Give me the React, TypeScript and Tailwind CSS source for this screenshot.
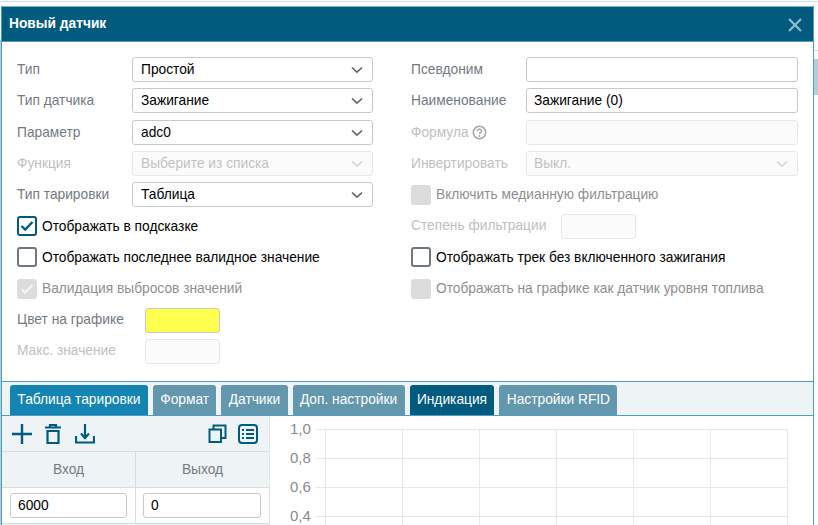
import React from "react";

const F = "font-['Liberation_Sans',Arial,sans-serif]";

function Chevron({ disabled }: { disabled?: boolean }) {
  return (
    <svg width="12" height="8" viewBox="0 0 12 8" className="absolute right-[9px] top-[8px]">
      <path d="M1 1.5 L6 6.2 L11 1.5" fill="none" stroke={disabled ? "#d4d6d9" : "#5c6670"} strokeWidth="1.6" />
    </svg>
  );
}

function Select({ value, disabled }: { value: string; disabled?: boolean }) {
  return (
    <div
      className={
        "relative h-[25px] w-[241px] rounded-[3px] border pl-[8px] text-[13.75px] leading-[23px] " +
        (disabled ? "border-[#e8e8e8] bg-[#fbfbfb] text-[#c2c2c2]" : "border-[#c8c8c8] bg-white text-black")
      }
    >
      {value}
      <Chevron disabled={disabled} />
    </div>
  );
}

function Input({ value, disabled, className = "w-[272px]" }: { value?: string; disabled?: boolean; className?: string }) {
  return (
    <div
      className={
        "h-[25px] rounded-[3px] border pl-[7px] text-[13.75px] leading-[23px] " +
        (disabled ? "border-[#e8e8e8] bg-[#fbfbfb] " : "border-[#c8c8c8] bg-white text-black ") +
        className
      }
    >
      {value}
    </div>
  );
}

function Label({ children, disabled, w, raised }: { children: React.ReactNode; disabled?: boolean; w: string; raised?: boolean }) {
  return (
    <div
      className={
        "shrink-0 text-[13.75px] " +
        (raised ? "leading-[23px] " : "leading-[25px] ") +
        w +
        " " +
        (disabled ? "text-[#c0c0c0]" : "text-[#727a82]")
      }
    >
      {children}
    </div>
  );
}

function Check({ state, label }: { state: "on" | "off" | "dis-on" | "dis"; label: string }) {
  const box =
    state === "on"
      ? "border-2 border-[#005b7f] bg-white"
      : state === "off"
        ? "border-2 border-[#6f7782] bg-white"
        : "bg-[#dcdcdc]";
  const text = state === "on" || state === "off" ? "text-black" : "text-[#8f8f8f]";
  return (
    <div className="flex h-[25px] items-center">
      <div className={"flex h-[20px] w-[20px] shrink-0 items-center justify-center rounded-[3px] " + box}>
        {state === "on" && (
          <svg width="14" height="12" viewBox="0 0 14 12">
            <path d="M1.5 6 L5.2 9.5 L12.5 2" fill="none" stroke="#005b7f" strokeWidth="2.4" />
          </svg>
        )}
        {state === "dis-on" && (
          <svg width="14" height="12" viewBox="0 0 14 12">
            <path d="M1.5 6 L5.2 9.5 L12.5 2" fill="none" stroke="#f4f4f4" strokeWidth="2.4" />
          </svg>
        )}
      </div>
      <span className={"ml-[5px] text-[13.75px] leading-[21px] " + text}>{label}</span>
    </div>
  );
}

function Tab({ children, kind }: { children: React.ReactNode; kind?: "first" | "active" }) {
  const bg = kind === "first" ? "bg-[#1485b3]" : kind === "active" ? "bg-[#005b7f]" : "bg-[#6297ad]";
  return <div className={"h-[30px] rounded-t-[3px] px-[7.35px] text-[13.75px] leading-[29px] text-white " + bg}>{children}</div>;
}

function Chart() {
  const xs = [0, 77, 154, 231, 308, 385, 462];
  return (
    <div className="relative min-w-0 flex-1 bg-white pl-[51px] pt-[13px]">
      {["1,0", "0,8", "0,6", "0,4"].map((t, i) => (
        <div key={t} className="absolute left-[20px] text-[15px] leading-[16px] text-[#8b8b8b]" style={{ top: 5 + i * 29 }}>
          {t}
        </div>
      ))}
      <svg width="500" height="100" className="block overflow-visible">
        {[0, 29, 58, 87].map((y) => (
          <line key={y} x1="-5" x2="467" y1={y + 0.5} y2={y + 0.5} stroke="#e8e8e8" />
        ))}
        {xs.map((x) => (
          <line key={x} x1={x + 4.5} x2={x + 4.5} y1="0" y2="100" stroke="#e8e8e8" />
        ))}
      </svg>
    </div>
  );
}

export default function App() {
  return (
    <div className={"relative h-[525px] w-[818px] overflow-hidden bg-[#fbfcfc] pl-px pt-[6px] " + F}>
      <div className="absolute left-0 right-0 top-px h-px bg-[#cfe2ea]" />
      <div className="absolute bottom-0 left-0 top-[40px] w-px bg-[#a9d0df]" />
      <div className="absolute right-0 top-[50px] h-px w-[4px] bg-[#dfe3e5]" />
      <div className="absolute right-0 top-[59px] h-[36px] w-[4px] bg-[#b5cdd8]" />
      <div className="relative h-[519px] w-[813px] overflow-hidden border-x border-[#4f9cc4] bg-white">
        <div className="flex h-[36px] items-center justify-between border-y border-[#4f9cc4] border-t-[#7fb3c8] bg-[#005b7f] pl-[7px] pr-[11px] pt-px">
          <span className="text-[13.75px] font-bold text-white">Новый датчик</span>
          <svg width="14" height="14" viewBox="0 0 14 14">
            <path d="M1 1 L13 13 M13 1 L1 13" stroke="#8fbdd0" strokeWidth="2.2" />
          </svg>
        </div>

        <div className="flex h-[339px] pt-[15px]">
          <div className="flex w-[394px] shrink-0 flex-col gap-[6.33px] pl-[15px]">
            <div className="flex"><Label w="w-[115px]">Тип</Label><Select value="Простой" /></div>
            <div className="flex"><Label w="w-[115px]">Тип датчика</Label><Select value="Зажигание" /></div>
            <div className="flex"><Label w="w-[115px]">Параметр</Label><Select value="adc0" /></div>
            <div className="flex"><Label w="w-[115px]" disabled>Функция</Label><Select value="Выберите из списка" disabled /></div>
            <div className="flex"><Label w="w-[115px]">Тип тарировки</Label><Select value="Таблица" /></div>
            <Check state="on" label="Отображать в подсказке" />
            <Check state="off" label="Отображать последнее валидное значение" />
            <Check state="dis-on" label="Валидация выбросов значений" />
            <div className="flex"><Label w="w-[128px]" raised>Цвет на графике</Label><div className="h-[25px] w-[75px] rounded-[3px] border border-[#c8c8c8] bg-[#ffff4d]" /></div>
            <div className="flex"><Label w="w-[128px]" raised disabled>Макс. значение</Label><Input disabled className="w-[75px]" /></div>
          </div>

          <div className="flex flex-col gap-[6.33px] pl-[15px]">
            <div className="flex"><Label w="w-[115px]">Псевдоним</Label><Input /></div>
            <div className="flex"><Label w="w-[115px]">Наименование</Label><Input value="Зажигание (0)" /></div>
            <div className="flex">
              <Label w="w-[115px]" disabled>
                <span className="flex h-[25px] items-center gap-[3px]">
                  Формула
                  <svg width="15" height="15" viewBox="0 0 15 15">
                    <circle cx="7.5" cy="7.5" r="6.2" fill="none" stroke="#a8a8a8" strokeWidth="1.6" />
                    <path d="M5.4 6 C5.4 3.6 9.6 3.6 9.6 5.9 C9.6 7.4 7.5 7.2 7.5 9" fill="none" stroke="#a8a8a8" strokeWidth="1.5" />
                    <circle cx="7.5" cy="11" r="0.9" fill="#a8a8a8" />
                  </svg>
                </span>
              </Label>
              <Input disabled />
            </div>
            <div className="flex">
              <Label w="w-[115px]" disabled>Инвертировать</Label>
              <div className="relative h-[25px] w-[272px] rounded-[3px] border border-[#e8e8e8] bg-[#fbfbfb] pl-[7px] text-[13.75px] leading-[23px] text-[#c2c2c2]">
                Выкл.
                <Chevron disabled />
              </div>
            </div>
            <Check state="dis" label="Включить медианную фильтрацию" />
            <div className="flex"><Label w="w-[150px]" raised disabled>Степень фильтрации</Label><Input disabled className="w-[75px]" /></div>
            <Check state="off" label="Отображать трек без включенного зажигания" />
            <Check state="dis" label="Отображать на графике как датчик уровня топлива" />
          </div>
        </div>

        <div className="flex h-[35px] items-end gap-[5px] border-y border-[#4f9cc4] bg-[#eef3f6] pl-[8px]">
          <Tab kind="first">Таблица тарировки</Tab>
          <Tab>Формат</Tab>
          <Tab>Датчики</Tab>
          <Tab>Доп. настройки</Tab>
          <Tab kind="active">Индикация</Tab>
          <Tab>Настройки RFID</Tab>
        </div>

        <div className="flex">
          <div className="w-[268px] shrink-0 border-r border-[#e4e4e4] bg-[#eef3f6]">
            <div className="flex h-[35px] items-center justify-between pl-[10px] pr-[11px] text-[#005b7f]">
              <div className="flex items-center">
                <svg width="20" height="20" viewBox="0 0 20 20"><path d="M10 0 V20 M0 10 H20" stroke="currentColor" strokeWidth="2.4" /></svg>
                <svg className="ml-[13px]" width="16" height="20" viewBox="0 0 16 20" fill="none" stroke="currentColor" strokeWidth="2.2"><path d="M2.5 7 H13.5 V19 H2.5 Z M0 3.5 H16" /><path d="M5 3 V1 H11 V3" /></svg>
                <svg className="ml-[14px]" width="20" height="20" viewBox="0 0 20 20" fill="none" stroke="currentColor" strokeWidth="2.2"><path d="M10 0 V13 M6 9.5 L10 14 L14 9.5" /><path d="M1 12 V18.5 H19 V12" /></svg>
              </div>
              <div className="flex items-center gap-[11px]">
                <svg width="19" height="19" viewBox="0 0 19 19" fill="none" stroke="currentColor" strokeWidth="2"><path d="M1.5 5.5 H13 V18 H1.5 Z" /><path d="M5.5 5 V1.5 H17.5 V14 H13.5" /></svg>
                <svg width="20" height="20" viewBox="0 0 20 20" fill="none" stroke="currentColor" strokeWidth="2"><rect x="1" y="1" width="18" height="18" rx="3" /><path d="M4 6 H6 M8 6 H16 M4 10 H6 M8 10 H16 M4 14 H6 M8 14 H16" /></svg>
              </div>
            </div>
            <div className="flex h-[37px] border-y border-[#dcdcdc] text-[13.75px] leading-[35px] text-[#727a82]">
              <div className="w-[134px] border-r border-[#dcdcdc] text-center">Вход</div>
              <div className="flex-1 text-center">Выход</div>
            </div>
            <div className="flex h-[36px] border-b border-[#dcdcdc] bg-white">
              <div className="flex w-[134px] items-center border-r border-[#dcdcdc] pl-[8px]"><Input value="6000" className="w-[117px]" /></div>
              <div className="flex flex-1 items-center pl-[7px]"><Input value="0" className="w-[118px]" /></div>
            </div>
          </div>
          <Chart />
        </div>
      </div>
    </div>
  );
}
